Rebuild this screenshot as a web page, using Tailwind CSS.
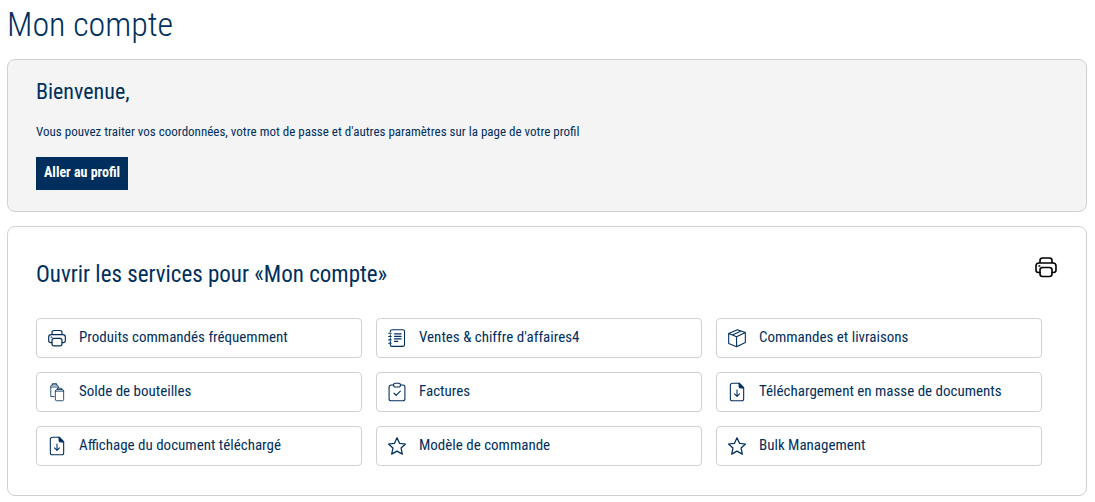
<!DOCTYPE html>
<html lang="fr">
<head>
    <meta charset="UTF-8">
    <meta name="viewport" content="width=device-width, initial-scale=1.0">
    <script src="https://cdn.jsdelivr.net/npm/@tailwindcss/browser@4"></script>
    <title>Mon compte</title>
</head>
<body class="bg-white text-[#002f5d] font-['Roboto_Condensed','Roboto',sans-serif]">
    <!-- shared icons -->
    <svg class="hidden">
        <symbol id="printer" viewBox="0 0 24 24">
            <path d="M6 8V5.500a2.500 2.500 0 0 1 2.500-2.500h7A2.500 2.500 0 0 1 18 5.500V8M6 17.500H4.500a2.500 2.500 0 0 1-2.500-2.500v-4a3 3 0 0 1 3-3h14a3 3 0 0 1 3 3v4a2.500 2.500 0 0 1-2.500 2.500H18"/>
            <rect x="6" y="12.500" width="12" height="9" rx="2.500"/>
            <path d="M5 11h.8"/>
        </symbol>
        <symbol id="document" viewBox="0 0 24 24">
            <path d="M14.500 1.500H6.500a2.500 2.500 0 0 0-2.500 2.500v16a2.500 2.500 0 0 0 2.500 2.500h11a2.500 2.500 0 0 0 2.500-2.500V7z"/>
            <path d="M14.500 1.500V5a2 2 0 0 0 2 2H20z" fill="currentColor"/>
            <path d="M12 9.500v7.500M9 14.200l3 3 3-3"/>
        </symbol>
        <symbol id="star" viewBox="0 0 24 24">
            <path d="M12 2.200l3 6.600 7.200.8-5.300 4.900 1.500 7.200L12 18.100l-6.400 3.600 1.500-7.200-5.300-4.900 7.200-.8z"/>
        </symbol>
    </svg>

    <main class="pl-[7px] pr-2 pb-1">
        <h1 class="pt-1 text-[34px] leading-[40px] font-light">Mon compte</h1>

        <section class="mt-[15px] rounded-lg border border-[#cfd1d3] bg-[#f4f4f4] px-7 pt-[18px] pb-[21px]">
            <h2 class="text-[22px] leading-[28px]">Bienvenue,</h2>
            <p class="mt-4 text-[13px] leading-5">Vous pouvez traiter vos coordonnées, votre mot de passe et d'autres paramètres sur la page de votre profil</p>
            <button type="button" class="mt-[15px] block h-[33px] bg-[#002f5d] px-2 pb-[2px] text-[14px] font-bold text-white">Aller au profil</button>
        </section>

        <section class="mt-[14px] rounded-lg border border-[#cfd1d3] px-7 pt-7 pb-[29px]">
            <div class="flex items-start justify-between">
                <h2 class="mt-[6px] text-[23px] leading-[28px]">Ouvrir les services pour «Mon compte»</h2>
                <button type="button" aria-label="Imprimer" class="text-black">
                    <svg class="size-6 fill-none stroke-current stroke-[1.6]" stroke-linecap="round" stroke-linejoin="round"><use href="#printer"/></svg>
                </button>
            </div>

            <nav class="mt-[29px] mr-4 grid grid-cols-3 gap-[14px] text-[15px]">
                <a href="#" class="flex h-10 items-center gap-3 rounded-sm border border-[#cfd1d3] px-[10px]">
                    <svg class="size-5 fill-none stroke-current stroke-[1.4]" stroke-linecap="round" stroke-linejoin="round"><use href="#printer"/></svg>
                    <span class="pb-[2px]">Produits commandés fréquemment</span>
                </a>
                <a href="#" class="flex h-10 items-center gap-3 rounded-sm border border-[#cfd1d3] px-[10px]">
                    <svg viewBox="0 0 24 24" class="size-5 fill-none stroke-current stroke-[1.3]" stroke-linecap="round" stroke-linejoin="round">
                        <path d="M4 4.500V4a2 2 0 0 1 2-2h13a2 2 0 0 1 2 2v16a2 2 0 0 1-2 2H6a2 2 0 0 1-2-2v-.5M4 8v1M4 12v1M4 16v1M2 6.200h3M2 10.200h3M2 14.200h3M2 18.200h3"/>
                        <path d="M9 7h8M9 10h8M9 13h8M9 16h4"/>
                    </svg>
                    <span class="pb-[2px]">Ventes &amp; chiffre d'affaires4</span>
                </a>
                <a href="#" class="flex h-10 items-center gap-3 rounded-sm border border-[#cfd1d3] px-[10px]">
                    <svg viewBox="0 0 24 24" class="size-5 fill-none stroke-current stroke-[1.3]" stroke-linecap="round" stroke-linejoin="round">
                        <path d="M2 6.500L12.500 2 22 5.500v12L11.500 22.500 2 18.500zM2 6.500l9.500 4L22 5.500M11.500 10.500v12M6.500 8.400L17 3.700"/>
                    </svg>
                    <span class="pb-[2px]">Commandes et livraisons</span>
                </a>
                <a href="#" class="flex h-10 items-center gap-3 rounded-sm border border-[#cfd1d3] px-[10px]">
                    <svg viewBox="0 0 24 24" class="size-5 fill-none stroke-current stroke-1" stroke-linecap="round" stroke-linejoin="round">
                        <path d="M8.500 17.500H4.500V5.500a2 2 0 0 1 2-2h5a2 2 0 0 1 2 2V7M6.500 3.500V2h5v1.500M4.500 6h9"/>
                        <path d="M10 11a2 2 0 0 1 2-2h6a2 2 0 0 1 2 2v10a1.500 1.500 0 0 1-1.500 1.500h-7A1.500 1.500 0 0 1 10 21zM12.500 9V7.500h5V9M10 11h10"/>
                    </svg>
                    <span class="pb-[2px]">Solde de bouteilles</span>
                </a>
                <a href="#" class="flex h-10 items-center gap-3 rounded-sm border border-[#cfd1d3] px-[10px]">
                    <svg viewBox="0 0 24 24" class="size-5 fill-none stroke-current stroke-[1.3]" stroke-linecap="round" stroke-linejoin="round">
                        <path d="M8 3.500H5a2.500 2.500 0 0 0-2.500 2.500v14A2.500 2.500 0 0 0 5 22.500h14a2.500 2.500 0 0 0 2.500-2.500V6A2.500 2.500 0 0 0 19 3.500h-3"/>
                        <rect x="8" y="1.500" width="8" height="4.500" rx="1.500"/>
                        <path d="M8.500 13.500l2.500 2.500 5-5"/>
                    </svg>
                    <span class="pb-[2px]">Factures</span>
                </a>
                <a href="#" class="flex h-10 items-center gap-3 rounded-sm border border-[#cfd1d3] px-[10px]">
                    <svg class="size-5 fill-none stroke-current stroke-[1.3]" stroke-linecap="round" stroke-linejoin="round"><use href="#document"/></svg>
                    <span class="pb-[2px]">Téléchargement en masse de documents</span>
                </a>
                <a href="#" class="flex h-10 items-center gap-3 rounded-sm border border-[#cfd1d3] px-[10px]">
                    <svg class="size-5 fill-none stroke-current stroke-[1.3]" stroke-linecap="round" stroke-linejoin="round"><use href="#document"/></svg>
                    <span class="pb-[2px]">Affichage du document téléchargé</span>
                </a>
                <a href="#" class="flex h-10 items-center gap-3 rounded-sm border border-[#cfd1d3] px-[10px]">
                    <svg class="size-5 fill-none stroke-current stroke-[1.5]" stroke-linecap="round" stroke-linejoin="round"><use href="#star"/></svg>
                    <span class="pb-[2px]">Modèle de commande</span>
                </a>
                <a href="#" class="flex h-10 items-center gap-3 rounded-sm border border-[#cfd1d3] px-[10px]">
                    <svg class="size-5 fill-none stroke-current stroke-[1.5]" stroke-linecap="round" stroke-linejoin="round"><use href="#star"/></svg>
                    <span class="pb-[2px]">Bulk Management</span>
                </a>
            </nav>
        </section>
    </main>
</body>
</html>
